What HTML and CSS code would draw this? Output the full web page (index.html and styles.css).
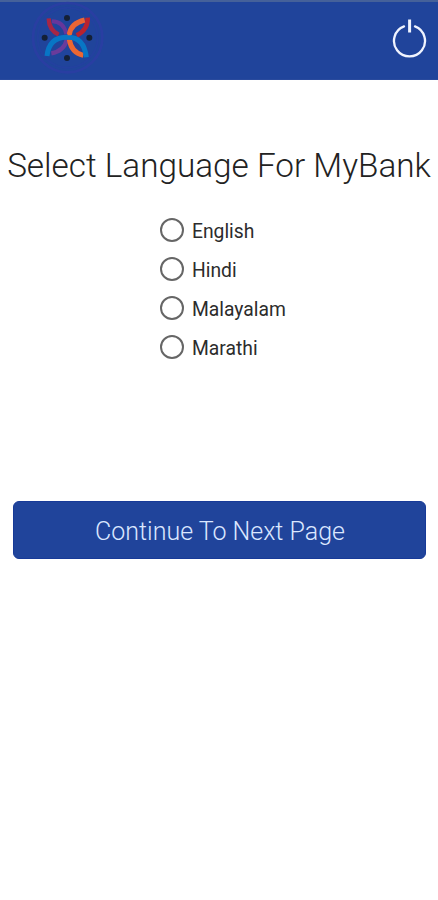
FILE: index.html
```html
<!DOCTYPE html>
<html lang="en">
<head>
<meta charset="utf-8">
<title>MyBank</title>
<link rel="stylesheet" href="styles.css">
</head>
<body>
<header class="bar">
  <svg class="logo" viewBox="0 0 285 235" fill="none">
    <circle cx="143" cy="113" r="104" stroke="#303aa6" stroke-width="8" opacity=".6"/>
    <circle cx="143" cy="113" r="90" stroke="#263da3" stroke-width="6" opacity=".5"/>
    <path d="M96 64Q130 64 139 102" stroke="#66369b" stroke-width="12"/>
    <path d="M86 55Q87 90 116 104" stroke="#a72645" stroke-width="13"/>
    <path d="M203 53Q204 90 170 106" stroke="#b9222e" stroke-width="14"/>
    <path d="M194 60Q152 70 148 104" stroke="#eb6534" stroke-width="15"/>
    <path d="M94 160Q132 154 141 118" stroke="#693b9b" stroke-width="13"/>
    <path d="M148 118Q154 158 190 166" stroke="#ed6732" stroke-width="15"/>
    <path d="M81 168Q87 113 138 112H146Q192 113 199 172" stroke="#0876c5" stroke-width="15"/>
    <path d="M148 96V106M149 122V130" stroke="#ed6732" stroke-width="10"/>
    <g fill="#142036"><circle cx="141" cy="54" r="9"/><circle cx="74" cy="113" r="9"/><circle cx="208" cy="113" r="9"/><circle cx="141" cy="174" r="9"/></g>
  </svg>
  <svg class="power" viewBox="0 0 36 42" fill="none" stroke="#f0f4ff" stroke-linecap="round">
    <path d="M12 8.4A15.5 15.5 0 1 0 23 8.4" stroke-width="2.3"/>
    <path d="M17.6 1.5V14.5" stroke-width="3" stroke-linecap="butt"/>
  </svg>
</header>
<main class="page">
  <h1 class="title"><span>Select Language For MyBank</span></h1>
  <div class="options">
    <label class="option"><input class="radio" type="radio" name="lang"><span>English</span></label>
    <label class="option"><input class="radio" type="radio" name="lang"><span>Hindi</span></label>
    <label class="option"><input class="radio" type="radio" name="lang"><span>Malayalam</span></label>
    <label class="option"><input class="radio" type="radio" name="lang"><span>Marathi</span></label>
  </div>
  <button class="next" type="button">Continue To Next Page</button>
</main>
</body>
</html>
```
FILE: styles.css
```css
* { box-sizing: border-box; }
body {
  margin: 0;
  min-height: 900px;
  background: #fff;
  font-family: Roboto, "Liberation Sans", sans-serif;
}
.bar {
  display: flex;
  justify-content: space-between;
  height: 80px;
  padding: 0 10px 0 20px;
  background: #20449b;
  border-top: 2px solid #45619a;
  border-bottom: 1px solid #294a9d;
}
.logo { width: 95px; height: 78.33px; margin-top: -2px; }
.power { width: 36px; height: 42px; margin-top: 16px; }
.page { display: flex; flex-direction: column; padding: 0 12px; }
.title {
  display: flex;
  justify-content: center;
  margin: 64px 0 0;
  line-height: 44px;
  font-size: 33.3px;
  font-weight: 300;
  white-space: nowrap;
  color: #222;
}
.options { margin: 22px 0 0 148px; }
.option {
  display: flex;
  align-items: center;
  gap: 8px;
  height: 39px;
  font-size: 19.3px;
  color: #2c2c2c;
}
.option span { padding-top: 3px; }
.radio {
  appearance: none;
  width: 24px;
  height: 24px;
  margin: 0;
  border: 2px solid #666;
  border-radius: 50%;
}
.next {
  width: 413px;
  height: 58px;
  margin: 135px 0 0 1px;
  padding: 2px 0 0 1px;
  border: 1px solid #173a98;
  border-radius: 6px;
  background: #20449b;
  color: #dbe7ff;
  font-family: inherit;
  font-size: 25px;
  font-weight: 300;
}
```
